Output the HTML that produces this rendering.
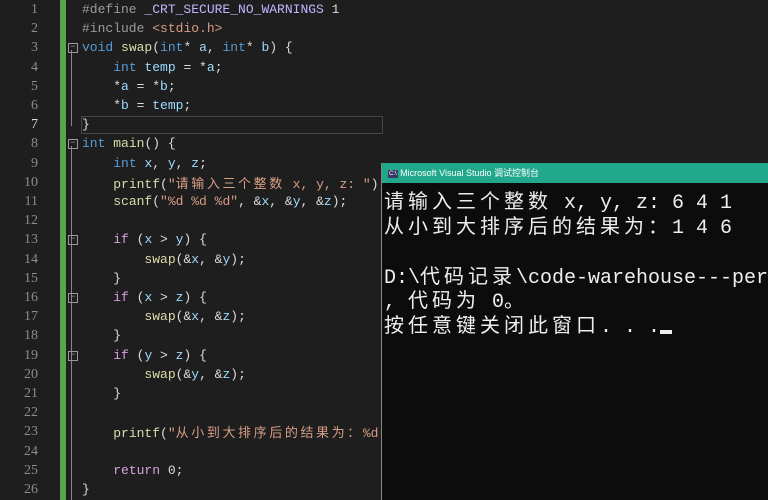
<!DOCTYPE html>
<html><head><meta charset="utf-8"><style>
body{margin:0;width:768px;height:500px;background:#1e1e1e;overflow:hidden;position:relative;font-family:"Liberation Mono","Noto Sans CJK SC",monospace}
.ln{position:absolute;left:0;width:38px;text-align:right;color:#8c8c8c;font-family:"Liberation Serif",serif;font-size:14px;line-height:16px}
.c{position:absolute;left:82px;font-size:13px;color:#dcdcdc;white-space:pre;line-height:16px;height:16px}
.k{color:#569cd6}.p{color:#d8a0df}.s{color:#d69d85}.f{color:#dcdcaa}.v{color:#9cdcfe}.m{color:#beb7ff}.g{color:#9b9b9b}
.z{letter-spacing:2.6px;font-family:"Noto Sans CJK SC",sans-serif;font-size:13px;line-height:16px}
.fold{position:absolute;left:68px;width:8px;height:8px;border:1px solid #999;color:#999;font-size:9px;line-height:7px;text-align:center}
#con{position:absolute;left:381px;top:163px;width:387px;height:337px;background:#0c0c0c;border-left:1px solid #888}
#tb{height:20px;background:#21a88b;color:#fff;font-family:"Liberation Sans","Noto Sans CJK SC",sans-serif;font-size:9px;line-height:20px;padding-left:6px}
.cl{position:absolute;left:2px;color:#eee;font-size:20px;white-space:pre;line-height:24px;height:24px}
.cz{font-family:"Noto Sans CJK SC",sans-serif;letter-spacing:4px;font-size:20px;line-height:24px}
</style></head><body>
<div style="position:absolute;left:60px;top:0;width:6px;height:500px;background:#57a64a"></div>
<div style="position:absolute;left:71px;top:50px;width:1px;height:76px;background:#888"></div>
<div style="position:absolute;left:71px;top:146px;width:1px;height:354px;background:#888"></div>
<div style="position:absolute;left:81px;top:116px;width:300px;height:16px;border:1px solid #464646"></div>
<div class="fold" style="top:43px">−</div>
<div class="fold" style="top:139px">−</div>
<div class="fold" style="top:235px">−</div>
<div class="fold" style="top:293px">−</div>
<div class="fold" style="top:351px">−</div>
<div class="ln" style="top:2px">1</div><div class="ln" style="top:21px">2</div><div class="ln" style="top:40px">3</div><div class="ln" style="top:60px">4</div><div class="ln" style="top:79px">5</div><div class="ln" style="top:98px">6</div><div class="ln" style="top:117px;color:#ddd">7</div><div class="ln" style="top:136px">8</div><div class="ln" style="top:156px">9</div><div class="ln" style="top:175px">10</div><div class="ln" style="top:194px">11</div><div class="ln" style="top:213px">12</div><div class="ln" style="top:232px">13</div><div class="ln" style="top:252px">14</div><div class="ln" style="top:271px">15</div><div class="ln" style="top:290px">16</div><div class="ln" style="top:309px">17</div><div class="ln" style="top:328px">18</div><div class="ln" style="top:348px">19</div><div class="ln" style="top:367px">20</div><div class="ln" style="top:386px">21</div><div class="ln" style="top:405px">22</div><div class="ln" style="top:424px">23</div><div class="ln" style="top:444px">24</div><div class="ln" style="top:463px">25</div><div class="ln" style="top:482px">26</div>
<div class="c" style="top:2px"><span class="g">#define</span> <span class="m">_CRT_SECURE_NO_WARNINGS</span> 1</div>
<div class="c" style="top:21px"><span class="g">#include</span> <span class="s">&lt;stdio.h&gt;</span></div>
<div class="c" style="top:40px"><span class="k">void</span> <span class="f">swap</span>(<span class="k">int</span>* <span class="v">a</span>, <span class="k">int</span>* <span class="v">b</span>) {</div>
<div class="c" style="top:60px">    <span class="k">int</span> <span class="v">temp</span> = *<span class="v">a</span>;</div>
<div class="c" style="top:79px">    *<span class="v">a</span> = *<span class="v">b</span>;</div>
<div class="c" style="top:98px">    *<span class="v">b</span> = <span class="v">temp</span>;</div>
<div class="c" style="top:117px">}</div>
<div class="c" style="top:136px"><span class="k">int</span> <span class="f">main</span>() {</div>
<div class="c" style="top:156px">    <span class="k">int</span> <span class="v">x</span>, <span class="v">y</span>, <span class="v">z</span>;</div>
<div class="c" style="top:175px">    <span class="f">printf</span>(<span class="s">"<span class="z">请输入三个整数</span> x, y, z: "</span>);</div>
<div class="c" style="top:194px">    <span class="f">scanf</span>(<span class="s">"%d %d %d"</span>, &amp;<span class="v">x</span>, &amp;<span class="v">y</span>, &amp;<span class="v">z</span>);</div>
<div class="c" style="top:232px">    <span class="p">if</span> (<span class="v">x</span> &gt; <span class="v">y</span>) {</div>
<div class="c" style="top:252px">        <span class="f">swap</span>(&amp;<span class="v">x</span>, &amp;<span class="v">y</span>);</div>
<div class="c" style="top:271px">    }</div>
<div class="c" style="top:290px">    <span class="p">if</span> (<span class="v">x</span> &gt; <span class="v">z</span>) {</div>
<div class="c" style="top:309px">        <span class="f">swap</span>(&amp;<span class="v">x</span>, &amp;<span class="v">z</span>);</div>
<div class="c" style="top:328px">    }</div>
<div class="c" style="top:348px">    <span class="p">if</span> (<span class="v">y</span> &gt; <span class="v">z</span>) {</div>
<div class="c" style="top:367px">        <span class="f">swap</span>(&amp;<span class="v">y</span>, &amp;<span class="v">z</span>);</div>
<div class="c" style="top:386px">    }</div>
<div class="c" style="top:424px">    <span class="f">printf</span>(<span class="s">"<span class="z">从小到大排序后的结果为：</span>%d</span></div>
<div class="c" style="top:463px">    <span class="p">return</span> 0;</div>
<div class="c" style="top:482px">}</div>
<div id="con">
<div id="tb"><span style="display:inline-block;background:#3a3a6a;color:#fff;font-size:6px;padding:0 1px;line-height:8px;vertical-align:middle">C:\</span> Microsoft Visual Studio 调试控制台</div>
<div class="cl" style="top:25px"><span class="cz">请输入三个整数</span> x, y, z: 6 4 1</div>
<div class="cl" style="top:50px"><span class="cz">从小到大排序后的结果为：</span>1 4 6</div>
<div class="cl" style="top:100px">D:\<span class="cz">代码记录</span>\code-warehouse---per</div>
<div class="cl" style="top:124px">, <span class="cz">代码为</span> 0。</div>
<div class="cl" style="top:149px"><span class="cz">按任意键关闭此窗口</span>. . .<span style="display:inline-block;width:12px;height:4px;background:#eee;vertical-align:-2px"></span></div>
</div>
</body></html>
